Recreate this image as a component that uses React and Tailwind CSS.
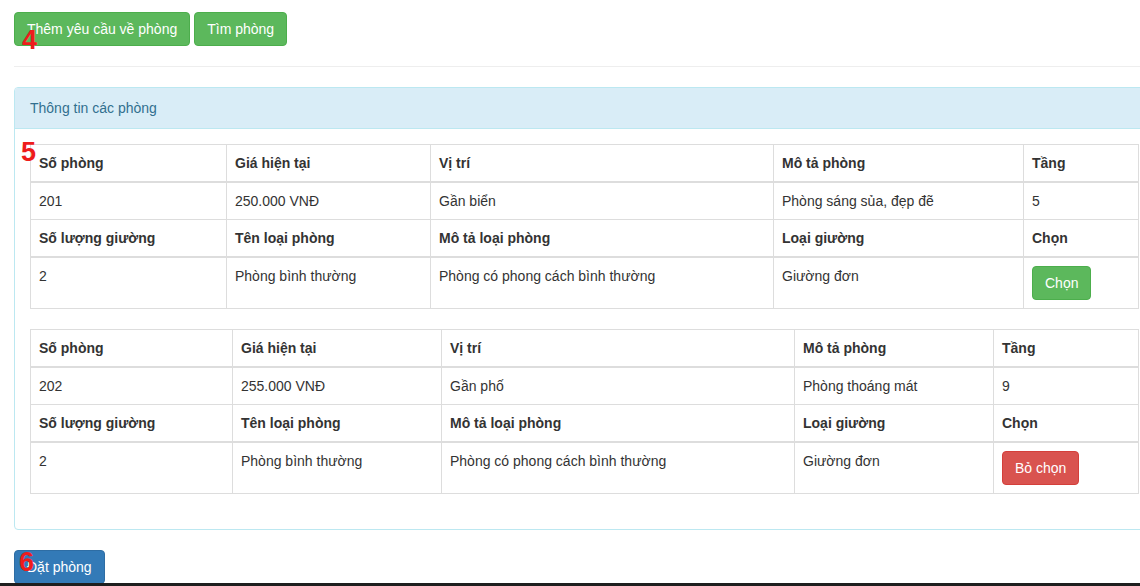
import React from "react";

const rooms = [
  {
    cols: [196, 204, 343, 250, 115],
    so: "201",
    gia: "250.000 VNĐ",
    viTri: "Gần biển",
    moTa: "Phòng sáng sủa, đẹp đẽ",
    tang: "5",
    soGiuong: "2",
    tenLoai: "Phòng bình thường",
    moTaLoai: "Phòng có phong cách bình thường",
    loaiGiuong: "Giường đơn",
    selected: false,
  },
  {
    cols: [202, 209, 353, 199, 145],
    so: "202",
    gia: "255.000 VNĐ",
    viTri: "Gần phố",
    moTa: "Phòng thoáng mát",
    tang: "9",
    soGiuong: "2",
    tenLoai: "Phòng bình thường",
    moTaLoai: "Phòng có phong cách bình thường",
    loaiGiuong: "Giường đơn",
    selected: true,
  },
];

const th = "border border-[#ddd] border-b-2 px-2 py-2 text-left align-bottom font-bold leading-5";
const td = "border border-[#ddd] px-2 py-2 align-top leading-5";

function Btn({ color, children }) {
  const styles = {
    green: "bg-[#5cb85c] border-[#4cae4c]",
    red: "bg-[#d9534f] border-[#d43f3a]",
    blue: "bg-[#337ab7] border-[#2e6da4]",
  };
  return (
    <button
      type="button"
      className={`${styles[color]} border text-white text-sm leading-5 px-3 py-1.5 rounded-[4px] whitespace-nowrap`}
    >
      {children}
    </button>
  );
}

function RoomTable({ room }) {
  return (
    <table className="w-full table-fixed border-collapse mb-5 text-sm text-[#333]">
      <colgroup>
        {room.cols.map((w, i) => (
          <col key={i} style={{ width: w }} />
        ))}
      </colgroup>
      <tbody>
        <tr>
          <th className={th}>Số phòng</th>
          <th className={th}>Giá hiện tại</th>
          <th className={th}>Vị trí</th>
          <th className={th}>Mô tả phòng</th>
          <th className={th}>Tầng</th>
        </tr>
        <tr>
          <td className={td}>{room.so}</td>
          <td className={td}>{room.gia}</td>
          <td className={td}>{room.viTri}</td>
          <td className={td}>{room.moTa}</td>
          <td className={td}>{room.tang}</td>
        </tr>
        <tr>
          <th className={th}>Số lượng giường</th>
          <th className={th}>Tên loại phòng</th>
          <th className={th}>Mô tả loại phòng</th>
          <th className={th}>Loại giường</th>
          <th className={th}>Chọn</th>
        </tr>
        <tr>
          <td className={td}>{room.soGiuong}</td>
          <td className={td}>{room.tenLoai}</td>
          <td className={td}>{room.moTaLoai}</td>
          <td className={td}>{room.loaiGiuong}</td>
          <td className={td}>
            {room.selected ? <Btn color="red">Bỏ chọn</Btn> : <Btn color="green">Chọn</Btn>}
          </td>
        </tr>
      </tbody>
    </table>
  );
}

function Mark({ className, children }) {
  return (
    <span
      className={`absolute text-[27px] leading-none font-bold text-[#ee1c1c] font-['Liberation_Sans',Arial,sans-serif] ${className}`}
    >
      {children}
    </span>
  );
}

export default function App() {
  return (
    <div className="relative w-[1140px] h-[586px] overflow-hidden bg-white text-sm text-[#333] font-['Liberation_Sans',Arial,sans-serif]">
      <div className="pl-[14px] pt-3">
        {/* ---------------- TOP ACTIONS ---------------- */}
        <div className="flex gap-[4px]">
          <Btn color="green">Thêm yêu cầu về phòng</Btn>
          <Btn color="green">Tìm phòng</Btn>
        </div>

        <hr className="my-5 border-0 border-t border-[#eee]" />

        {/* ---------------- PANEL ---------------- */}
        <div className="w-[1140px] border border-[#bce8f1] rounded-[4px] mb-5">
          <div className="bg-[#d9edf7] text-[#31708f] border-b border-[#bce8f1] px-[15px] py-[10px] leading-5 rounded-t-[3px]">
            Thông tin các phòng
          </div>
          <div className="p-[15px]">
            {rooms.map((room) => (
              <RoomTable key={room.so} room={room} />
            ))}
          </div>
        </div>

        <Btn color="blue">Đặt phòng</Btn>
      </div>

      {/* annotation marks */}
      <Mark className="left-[22px] top-[27px]">4</Mark>
      <Mark className="left-[21px] top-[139px]">5</Mark>
      <Mark className="left-[19px] top-[549px]">6</Mark>

      <div className="absolute left-0 bottom-0 w-full h-[3px] bg-[#1e1e1e]" />
    </div>
  );
}
